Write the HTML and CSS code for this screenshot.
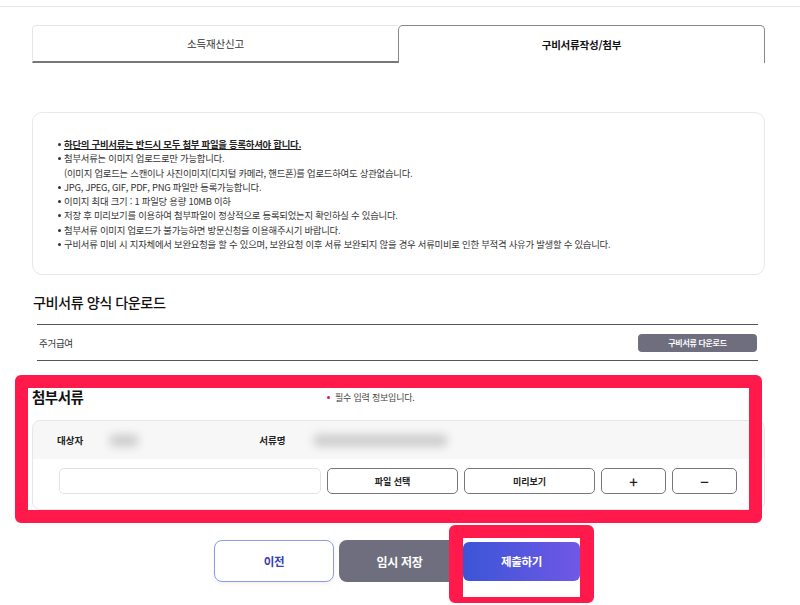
FILE: index.html
```html
<!DOCTYPE html>
<html lang="ko">
<head>
<meta charset="utf-8">
<link rel="stylesheet" href="styles.css">
</head>
<body>
<div class="topbar"></div>
<div class="page">
  <div class="tabs">
    <div class="tab">소득재산신고</div>
    <div class="tab active">구비서류작성/첨부</div>
  </div>

  <div class="info">
    <ul>
      <li><b><u>하단의 구비서류는 반드시 모두 첨부 파일을 등록하셔야 합니다.</u></b></li>
      <li>첨부서류는 이미지 업로드로만 가능합니다.<br>(이미지 업로드는 스캔이나 사진이미지(디지털 카메라, 핸드폰)를 업로드하여도 상관없습니다.</li>
      <li>JPG, JPEG, GIF, PDF, PNG 파일만 등록가능합니다.</li>
      <li>이미지 최대 크기 : 1 파일당 용량 10MB 이하</li>
      <li>저장 후 미리보기를 이용하여 첨부파일이 정상적으로 등록되었는지 확인하실 수 있습니다.</li>
      <li>첨부서류 이미지 업로드가 불가능하면 방문신청을 이용해주시기 바랍니다.</li>
      <li>구비서류 미비 시 지자체에서 보완요청을 할 수 있으며, 보완요청 이후 서류 보완되지 않을 경우 서류미비로 인한 부적격 사유가 발생할 수 있습니다.</li>
    </ul>
  </div>

  <h2 class="heading">구비서류 양식 다운로드</h2>
  <div class="dl-table">
    <div class="dl-row">
      <span class="dl-name">주거급여</span>
      <button class="dl-btn">구비서류 다운로드</button>
    </div>
  </div>

  <div class="attach-head">
    <h2 class="heading">첨부서류</h2>
    <span class="req"><i class="dot"></i>필수 입력 정보입니다.</span>
  </div>
  <div class="panel">
    <div class="panel-head">
      <span class="lbl">대상자</span>
      <span class="blur b1"></span>
      <span class="lbl l2">서류명</span>
      <span class="blur b2"></span>
    </div>
    <div class="file-row">
      <div class="file-input"></div>
      <button class="obtn wide">파일 선택</button>
      <button class="obtn wide">미리보기</button>
      <button class="obtn small">+</button>
      <button class="obtn small">−</button>
    </div>
  </div>

  <div class="actions">
    <button class="act prev">이전</button>
    <button class="act save">임시 저장</button>
    <button class="act submit">제출하기</button>
  </div>
</div>
<div class="hl hl1"></div>
<div class="hl hl2"></div>
</body>
</html>
```
FILE: styles.css
```css
* { box-sizing: border-box; }
html, body { margin: 0; padding: 0; background: #fff; }
body {
  font-family: "Noto Sans CJK KR", "Noto Sans", sans-serif;
  color: #222;
  width: 800px;
  height: 605px;
  overflow: hidden;
  position: relative;
}
button { font-family: inherit; cursor: pointer; }
.topbar { height: 7px; border-bottom: 1px solid #e8e8e8; }
.page { width: 733px; margin-left: 32px; }

.tabs { display: flex; margin-top: 18px; height: 38px; }
.tab {
  flex: 1;
  display: flex; align-items: center; justify-content: center;
  font-size: 10.5px;
  color: #333;
  letter-spacing: -0.2px;
}
.tab:first-child {
  border: 1px solid #e6e6e6;
  border-bottom: 2px solid #777;
  border-right: none;
  border-radius: 4px 0 0 0;
}
.tab.active {
  border: 1.5px solid #888;
  border-bottom: none;
  border-radius: 5px 5px 0 0;
  font-weight: 700;
  color: #111;
}

.info {
  margin-top: 49px;
  height: 163px;
  border: 1px solid #e8e8e8;
  border-radius: 10px;
  padding: 24px 0 0 22px;
}
.info ul { margin: 0; padding: 0 0 0 9px; list-style: none; }
.info li {
  position: relative;
  font-size: 9.4px;
  line-height: 14.25px;
  color: #333;
  letter-spacing: -0.25px;
}
.info li::before {
  content: "";
  position: absolute;
  left: -6px; top: 6px;
  width: 3px; height: 3px;
  border-radius: 50%;
  background: #333;
}
.info li b { color: #222; }

.heading {
  margin: 17px 0 0 1px;
  font-size: 14.2px;
  line-height: 20px;
  font-weight: 500;
  color: #111;
  letter-spacing: -0.5px;
}
.dl-table {
  margin: 12px 7px 0 5px;
  border-top: 1px solid #555;
  border-bottom: 1px solid #555;
}
.dl-row {
  height: 35px;
  display: flex; align-items: center; justify-content: space-between;
  padding: 0 1px 0 2px;
}
.dl-name { font-size: 9.5px; color: #333; letter-spacing: -0.3px; }
.dl-btn {
  width: 119px; height: 18px;
  border: none; border-radius: 4px;
  background: #6e6e7e;
  color: #fff;
  font-size: 8px; font-weight: 700;
  padding: 0;
  letter-spacing: -0.3px;
}

.attach-head { display: flex; align-items: center; margin-top: 26px; }
.attach-head .heading { margin: 0; width: 295px; font-weight: 700; font-size: 14.5px; }
.req { font-size: 9px; color: #444; display: flex; align-items: center; letter-spacing: -0.2px; }
.dot { display: inline-block; width: 3px; height: 3px; border-radius: 50%; background: #e8163c; margin-right: 5px; }

.panel {
  margin-top: 13px;
  border: 1px solid #e6e6e6;
  border-radius: 8px;
  overflow: hidden;
}
.panel-head {
  height: 38px;
  background: #f7f7f7;
  display: flex; align-items: center;
  padding-left: 24px;
}
.lbl { font-size: 9.5px; font-weight: 700; color: #222; }
.blur {
  display: inline-block;
  height: 13px;
  background: #cfcfcf;
  border-radius: 8px;
  filter: blur(4px);
}
.b1 { width: 30px; margin-left: 26px; }
.l2 { margin-left: 120px; }
.b2 { width: 135px; margin-left: 28px; }

.file-row {
  display: flex; gap: 6px;
  padding: 9px 0 15px 26px;
}
.file-input {
  width: 262px; height: 26px;
  border: 1px solid #e2e2e2;
  border-radius: 5px;
}
.obtn {
  height: 26px;
  background: #fff;
  border: 1px solid #777;
  border-radius: 5px;
  font-size: 9px; font-weight: 700;
  color: #222;
  padding: 0;
}
.obtn.wide { width: 131px; }
.obtn.small { width: 65px; font-size: 15px; font-weight: 500; line-height: 1; }

.actions {
  display: flex; gap: 5px;
  margin-top: 30px;
  padding-left: 182px;
  align-items: center;
}
.act {
  height: 42px;
  border-radius: 8px;
  font-size: 11.5px; font-weight: 700;
  padding: 0;
  letter-spacing: -0.3px;
}
.prev { width: 120px; background: #fff; border: 1px solid #8c9be6; color: #3340b0; box-shadow: 0 2px 4px rgba(0,0,0,0.06); }
.save { width: 121px; background: #6e6e7e; border: none; color: #fff; font-size: 12px; }
.submit {
  width: 117px; height: 39px;
  border: none; border-radius: 6px;
  background: linear-gradient(90deg, #3b55d6, #7058e6);
  color: #fff;
  margin-left: -2px;
}

.hl {
  position: absolute;
  border: 13px solid #ff1a4b;
  border-radius: 6px;
  pointer-events: none;
}
.hl1 { left: 15px; top: 375px; width: 747px; height: 148px; }
.hl2 { left: 449px; top: 525px; width: 145px; height: 78px; border-width: 13px 14px 6px 14px; }
```
